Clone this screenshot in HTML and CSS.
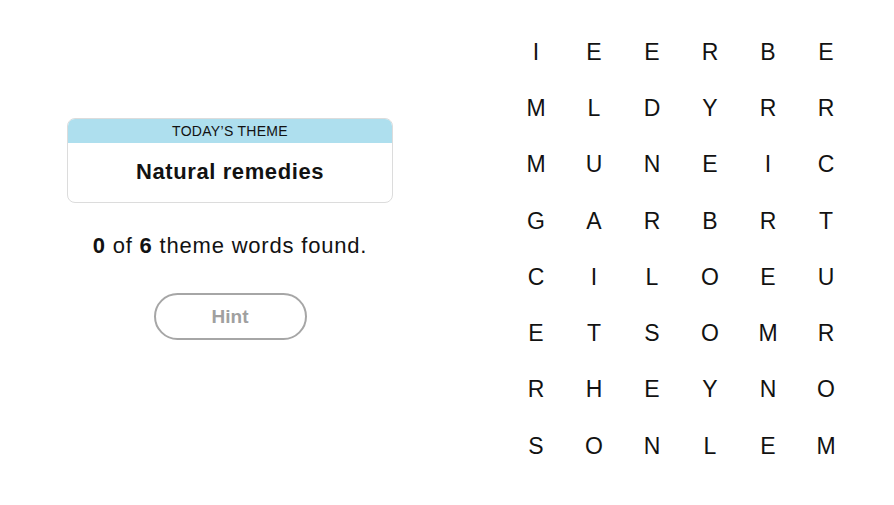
FILE: index.html
```html
<!DOCTYPE html>
<html>
<head>
<meta charset="utf-8">
<link rel="stylesheet" href="styles.css">
</head>
<body>
<div class="page">
  <div class="left">
    <div class="theme-card">
      <div class="theme-head">TODAY’S THEME</div>
      <div class="theme-title">Natural remedies</div>
    </div>
    <p class="found"><b>0</b> of <b>6</b> theme words found.</p>
    <button class="hint">Hint</button>
  </div>
  <div class="grid">
    <span>I</span><span>E</span><span>E</span><span>R</span><span>B</span><span>E</span>
    <span>M</span><span>L</span><span>D</span><span>Y</span><span>R</span><span>R</span>
    <span>M</span><span>U</span><span>N</span><span>E</span><span>I</span><span>C</span>
    <span>G</span><span>A</span><span>R</span><span>B</span><span>R</span><span>T</span>
    <span>C</span><span>I</span><span>L</span><span>O</span><span>E</span><span>U</span>
    <span>E</span><span>T</span><span>S</span><span>O</span><span>M</span><span>R</span>
    <span>R</span><span>H</span><span>E</span><span>Y</span><span>N</span><span>O</span>
    <span>S</span><span>O</span><span>N</span><span>L</span><span>E</span><span>M</span>
  </div>
</div>
</body>
</html>
```
FILE: styles.css
```css
html, body {
  margin: 0;
  padding: 0;
  background: #fff;
  color: #121212;
  font-family: "Liberation Sans", Arial, sans-serif;
}
.page {
  display: flex;
  align-items: flex-start;
  width: 894px;
  height: 505px;
}
.left {
  width: 326px;
  margin-left: 67px;
  margin-top: 118px;
  display: flex;
  flex-direction: column;
  align-items: center;
}
.theme-card {
  width: 100%;
  box-sizing: border-box;
  border: 1px solid #dcdcdc;
  border-radius: 8px;
  overflow: hidden;
}
.theme-head {
  background: #aedfee;
  height: 24px;
  line-height: 24px;
  text-align: center;
  font-size: 14px;
  letter-spacing: 0.3px;
}
.theme-title {
  height: 59px;
  line-height: 58px;
  text-align: center;
  font-weight: bold;
  font-size: 22px;
  letter-spacing: 0.6px;
}
.found {
  margin: 30px 0 0;
  font-size: 22px;
  letter-spacing: 0.8px;
  line-height: 26px;
  text-align: center;
}
.found b { font-weight: bold; }
.hint {
  margin-top: 34px;
  width: 153px;
  height: 47px;
  border: 2px solid #a6a6a6;
  border-radius: 24px;
  background: #fff;
  color: #a0a0a0;
  font-family: "Liberation Sans", Arial, sans-serif;
  font-weight: bold;
  font-size: 19px;
  padding: 0;
}
.grid {
  margin-left: 114px;
  margin-top: 24px;
  display: grid;
  grid-template-columns: repeat(6, 58px);
  grid-auto-rows: 56.3px;
}
.grid span {
  display: flex;
  align-items: center;
  justify-content: center;
  font-size: 23px;
}
```
